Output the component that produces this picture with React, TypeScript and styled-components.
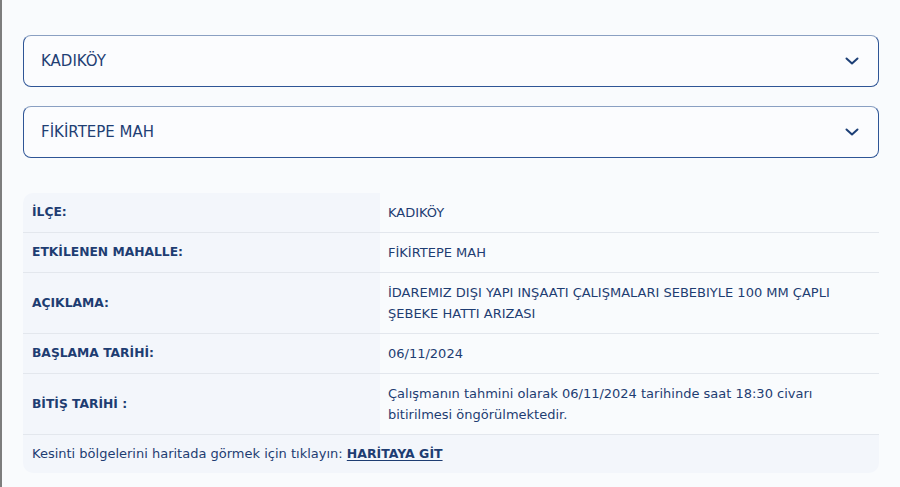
import React from 'react'
import styled, { createGlobalStyle } from 'styled-components'

const GlobalStyle = createGlobalStyle`
  html, body {
    margin: 0;
    padding: 0;
    background: #f9fbfd;
  }
  body {
    font-family: 'DejaVu Sans', 'Noto Sans', sans-serif;
    color: #1e3d72;
  }
`

const Page = styled.div`
  min-height: 487px;
  box-sizing: border-box;
  border-left: 2px solid #7d7d7d;
  padding: 35px 21px 14px 21px;
`

const SelectList = styled.div`
  display: flex;
  flex-direction: column;
  gap: 19px;
`

const SelectBox = styled.div`
  height: 52px;
  box-sizing: border-box;
  display: flex;
  align-items: center;
  justify-content: space-between;
  padding: 0 18px 0 17px;
  border: 1px solid #2e5596;
  border-top-color: #8aa0c2;
  border-radius: 8px;
  background: #fbfcfe;
  font-size: 15px;
  color: #1f3f74;
`

const Chevron = () => (
  <svg width="16" height="16" viewBox="0 0 16 16" fill="none">
    <path d="M2.5 5.5L8 10.5L13.5 5.5" stroke="#1c3f76" strokeWidth="2" strokeLinecap="round" strokeLinejoin="round" />
  </svg>
)

const InfoTable = styled.div`
  margin-top: 35px;
  display: grid;
  grid-template-columns: 357px 1fr;
  border-radius: 10px;
  overflow: hidden;
  font-size: 13px;
  line-height: 21px;
`

const LabelCell = styled.div`
  background: #f3f6fb;
  padding: 9px 9px;
  font-size: 12.3px;
  font-weight: 700;
  display: flex;
  align-items: center;
  border-bottom: 1px solid #e3e7ed;
`

const ValueCell = styled.div`
  background: #f9fbfd;
  padding: 9px 20px 9px 8px;
  display: flex;
  align-items: center;
  border-bottom: 1px solid #e3e7ed;
`

const FooterRow = styled.div`
  grid-column: 1 / -1;
  background: #f3f6fb;
  padding: 8px 9px 9px 9px;
`

const MapLink = styled.a`
  font-size: 12.5px;
  font-weight: 700;
  color: #1e3d72;
  text-decoration: underline;
  text-underline-offset: 2px;
`

const rows: [string, string][] = [
  ['İLÇE:', 'KADIKÖY'],
  ['ETKİLENEN MAHALLE:', 'FİKİRTEPE MAH'],
  ['AÇIKLAMA:', 'İDAREMIZ DIŞI YAPI INŞAATI ÇALIŞMALARI SEBEBIYLE 100 MM ÇAPLI ŞEBEKE HATTI ARIZASI'],
  ['BAŞLAMA TARİHİ:', '06/11/2024'],
  ['BİTİŞ TARİHİ :', 'Çalışmanın tahmini olarak 06/11/2024 tarihinde saat 18:30 civarı bitirilmesi öngörülmektedir.'],
]

const App = () => (
  <>
    <GlobalStyle />
    <Page>
      <SelectList>
        <SelectBox>
          <span>KADIKÖY</span>
          <Chevron />
        </SelectBox>
        <SelectBox>
          <span>FİKİRTEPE MAH</span>
          <Chevron />
        </SelectBox>
      </SelectList>
      <InfoTable>
        {rows.map(([label, value]) => (
          <React.Fragment key={label}>
            <LabelCell>{label}</LabelCell>
            <ValueCell>{value}</ValueCell>
          </React.Fragment>
        ))}
        <FooterRow>
          Kesinti bölgelerini haritada görmek için tıklayın: <MapLink href="#">HARİTAYA GİT</MapLink>
        </FooterRow>
      </InfoTable>
    </Page>
  </>
)

export default App
